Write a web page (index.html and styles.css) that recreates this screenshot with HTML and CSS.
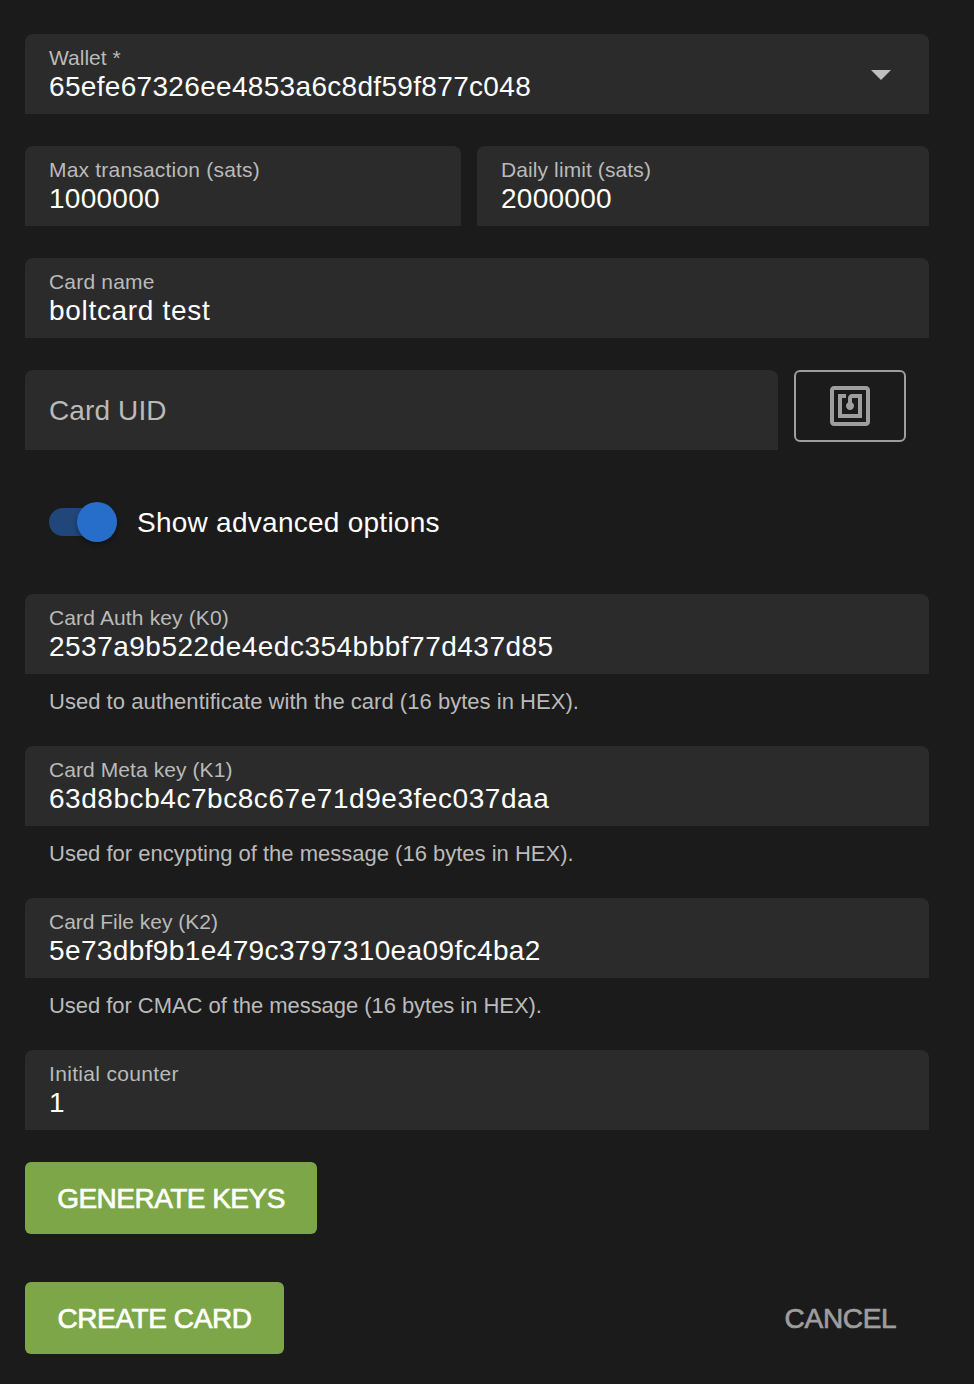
FILE: index.html
```
<!DOCTYPE html>
<html lang="en">
<head>
<meta charset="utf-8">
<title>Create card</title>
<link rel="stylesheet" href="styles.css">
</head>
<body>
<form class="form">
  <div class="field field-select wallet">
    <div class="field-body"><div class="label">Wallet *</div><div class="value">65efe67326ee4853a6c8df59f877c048</div></div>
    <svg class="caret" viewBox="0 0 24 24"><path d="M7 10l5 5 5-5z"/></svg>
  </div>
  <div class="row limits">
    <div class="field"><div class="label">Max transaction (sats)</div><div class="value">1000000</div></div>
    <div class="field daily"><div class="label">Daily limit (sats)</div><div class="value">2000000</div></div>
  </div>
  <div class="field card-name"><div class="label">Card name</div><div class="value">boltcard test</div></div>
  <div class="row uid">
    <div class="field field-empty"><div class="placeholder">Card UID</div></div>
    <button type="button" class="nfc" aria-label="Scan card">
      <svg viewBox="0 0 24 24"><path d="M20 2H4c-1.1 0-2 .9-2 2v16c0 1.1.9 2 2 2h16c1.1 0 2-.9 2-2V4c0-1.1-.9-2-2-2zm0 18H4V4h16v16zM18 6h-5c-1.1 0-2 .9-2 2v2.28c-.6.35-1 .98-1 1.72 0 1.1.9 2 2 2s2-.9 2-2c0-.74-.4-1.38-1-1.72V8h3v8H8V8h2V6H6v12h12V6z"/></svg>
    </button>
  </div>
  <div class="toggle-row">
    <div class="track"><div class="thumb"></div></div>
    <div class="toggle-label">Show advanced options</div>
  </div>
  <div class="key-auth">
    <div class="field"><div class="label">Card Auth key (K0)</div><div class="value">2537a9b522de4edc354bbbf77d437d85</div></div>
    <div class="hint">Used to authentificate with the card (16 bytes in HEX).</div>
  </div>
  <div class="key-meta">
    <div class="field"><div class="label">Card Meta key (K1)</div><div class="value">63d8bcb4c7bc8c67e71d9e3fec037daa</div></div>
    <div class="hint">Used for encypting of the message (16 bytes in HEX).</div>
  </div>
  <div class="key-file">
    <div class="field"><div class="label">Card File key (K2)</div><div class="value">5e73dbf9b1e479c3797310ea09fc4ba2</div></div>
    <div class="hint">Used for CMAC of the message (16 bytes in HEX).</div>
  </div>
  <div class="field counter"><div class="label">Initial counter</div><div class="value">1</div></div>
  <button type="button" class="btn generate">GENERATE KEYS</button>
  <div class="actions">
    <button type="button" class="btn create">CREATE CARD</button>
    <button type="button" class="btn cancel">CANCEL</button>
  </div>
</form>
</body>
</html>
```
FILE: styles.css
```
* { box-sizing: border-box; }
body {
  margin: 0;
  min-height: 1384px;
  background: #1b1b1b;
  color: #fff;
  font-family: "Liberation Sans", Arial, sans-serif;
  font-size: 28px;
  letter-spacing: 0.26px;
}
.form {
  display: flex;
  flex-direction: column;
  gap: 32px;
  width: 929px;
  padding: 34px 0 0 25px;
}
.field {
  height: 80px;
  padding: 12px 24px 0;
  border-radius: 8px 8px 0 0;
  background: #2b2b2b;
  white-space: nowrap;
}
.label {
  height: 24px;
  line-height: 24px;
  font-size: 21px;
  letter-spacing: 0.2px;
  color: #bababa;
}
.value { line-height: 34px; }
.field-select { display: flex; justify-content: space-between; }
.caret { width: 48px; height: 48px; margin-top: 4px; fill: #bfbfbf; }
.row { display: grid; gap: 16px; }
.limits { grid-template-columns: 436px 1fr; }
.uid { grid-template-columns: 753px 112px; }
.placeholder { line-height: 58px; letter-spacing: 0.12px; color: #bababa; }
.nfc {
  display: flex;
  align-items: center;
  justify-content: center;
  height: 72px;
  padding: 0;
  border: 2px solid #9e9e9e;
  border-radius: 6px;
  background: none;
}
.nfc svg { width: 48px; height: 48px; fill: #9e9e9e; }
.toggle-row {
  display: flex;
  align-items: center;
  gap: 20px;
  height: 80px;
  padding-left: 24px;
}
.track {
  display: flex;
  align-items: center;
  justify-content: flex-end;
  width: 68px;
  height: 28px;
  border-radius: 14px;
  background: #20467a;
}
.thumb {
  flex: none;
  width: 40px;
  height: 40px;
  border-radius: 50%;
  background: #266ec9;
  box-shadow: 0 3px 5px rgba(0, 0, 0, 0.3);
}
.toggle-label { padding-top: 2px; line-height: 40px; }
.hint {
  height: 40px;
  padding: 16px 24px 0;
  line-height: 24px;
  font-size: 22px;
  letter-spacing: 0;
  color: #bababa;
  white-space: nowrap;
}

/* Per-field tracking */
.wallet .label { letter-spacing: 0; }
.wallet .value { letter-spacing: 0.32px; }
.daily .label { letter-spacing: 0.1px; }
.card-name .value { letter-spacing: 0.69px; }
.key-auth .label { letter-spacing: 0.14px; }
.key-auth .value { letter-spacing: 0.49px; }
.key-auth .hint { letter-spacing: 0.03px; }
.key-meta .label { letter-spacing: 0.08px; }
.key-meta .value { letter-spacing: 0.55px; }
.key-file .label { letter-spacing: -0.02px; }
.key-file .value { letter-spacing: 0.38px; }
.key-file .hint { letter-spacing: -0.05px; }
.counter .label { letter-spacing: 0.33px; }

.btn {
  height: 72px;
  padding: 2px 0 0;
  border: 0;
  border-radius: 6px;
  background: #7da648;
  color: #fff;
  font: 28px/70px "Liberation Sans", Arial, sans-serif;
  letter-spacing: -0.4px;
  white-space: nowrap;
  -webkit-text-stroke: 0.7px currentColor;
}
.generate { width: 292px; letter-spacing: -0.52px; }
.actions { display: flex; justify-content: space-between; margin-top: 16px; }
.create { width: 259px; }
.cancel { width: 177px; background: none; color: #9e9e9e; letter-spacing: -0.3px; }
```
